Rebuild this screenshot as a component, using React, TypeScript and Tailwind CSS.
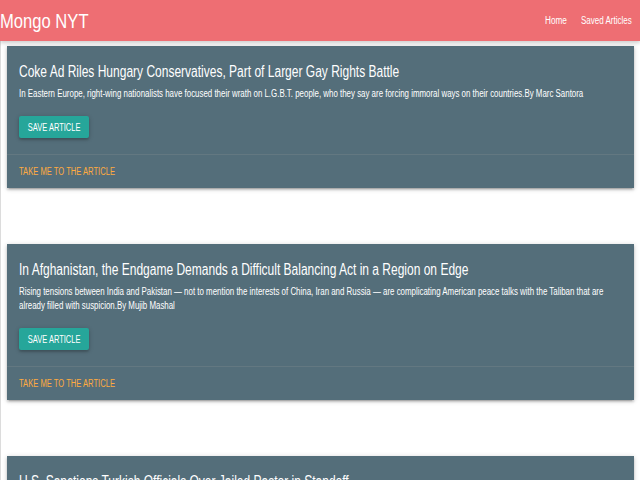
import React from 'react';

const articles = [
  {
    title: 'Coke Ad Riles Hungary Conservatives, Part of Larger Gay Rights Battle',
    summary:
      'In Eastern Europe, right-wing nationalists have focused their wrath on L.G.B.T. people, who they say are forcing immoral ways on their countries.By Marc Santora',
  },
  {
    title: 'In Afghanistan, the Endgame Demands a Difficult Balancing Act in a Region on Edge',
    summary:
      'Rising tensions between India and Pakistan — not to mention the interests of China, Iran and Russia — are complicating American peace talks with the Taliban that are already filled with suspicion.By Mujib Mashal',
  },
  {
    title: "U.S. Sanctions Turkish Officials Over Jailed Pastor in Standoff",
    summary: 'Washington and Ankara remain at odds.By Staff',
  },
];

const ArticleCard: React.FC<{ title: string; summary: string }> = ({ title, summary }) => (
  <div className="mx-[6px] overflow-hidden bg-[#546e7a] shadow-[0_2px_2px_0_rgba(0,0,0,0.14),0_3px_1px_-2px_rgba(0,0,0,0.12),0_1px_5px_0_rgba(0,0,0,0.2)]">
    <div className="px-[12px] pt-[14px] pb-[16px]">
      {/* headline, squeezed like the source */}
      <div className="h-[24px] whitespace-nowrap text-[16px] leading-[24px] text-white">
        <span className="inline-block origin-left scale-x-[0.75]">{title}</span>
      </div>
      <div className="mt-[3px] w-[764px] origin-left scale-x-[0.79] text-[10px] leading-[14px] text-white">
        {summary}
      </div>
      <button className="mt-[15px] flex h-[22px] w-[70px] items-center justify-center rounded-[2px] bg-[#26a69a] text-[10px] text-white shadow-[0_2px_2px_0_rgba(0,0,0,0.14),0_1px_5px_0_rgba(0,0,0,0.2)]">
        <span className="inline-block scale-x-[0.75] whitespace-nowrap">SAVE ARTICLE</span>
      </button>
    </div>
    <div className="flex h-[34px] items-center border-t border-[rgba(160,160,160,0.2)] px-[12px]">
      <a className="inline-block origin-left scale-x-[0.76] whitespace-nowrap text-[10px] text-[#ffab40]">
        TAKE ME TO THE ARTICLE
      </a>
    </div>
  </div>
);

export default function App() {
  return (
    <div className="flex h-screen flex-col overflow-hidden bg-white font-['Liberation_Sans',Arial,sans-serif]">
      <nav className="relative z-10 flex h-[41px] shrink-0 items-center bg-[#ee6e73] shadow-[0_2px_4px_rgba(0,0,0,0.2)]">
        <div className="whitespace-nowrap text-[20px] text-white">
          <span className="inline-block origin-left scale-x-[0.83]">Mongo NYT</span>
        </div>
        <div className="ml-auto flex items-center pr-[8px] text-[10px] text-white">
          <a className="w-[22px] whitespace-nowrap">
            <span className="inline-block origin-left scale-x-[0.82]">Home</span>
          </a>
          <a className="ml-[14px] w-[51px] whitespace-nowrap">
            <span className="inline-block origin-left scale-x-[0.8]">Saved Articles</span>
          </a>
        </div>
      </nav>
      <main className="flex flex-col gap-[56px] border-l border-[#dcdcdc] pt-[5px]">
        {articles.map((a, i) => (
          <ArticleCard key={i} {...a} />
        ))}
      </main>
    </div>
  );
}
